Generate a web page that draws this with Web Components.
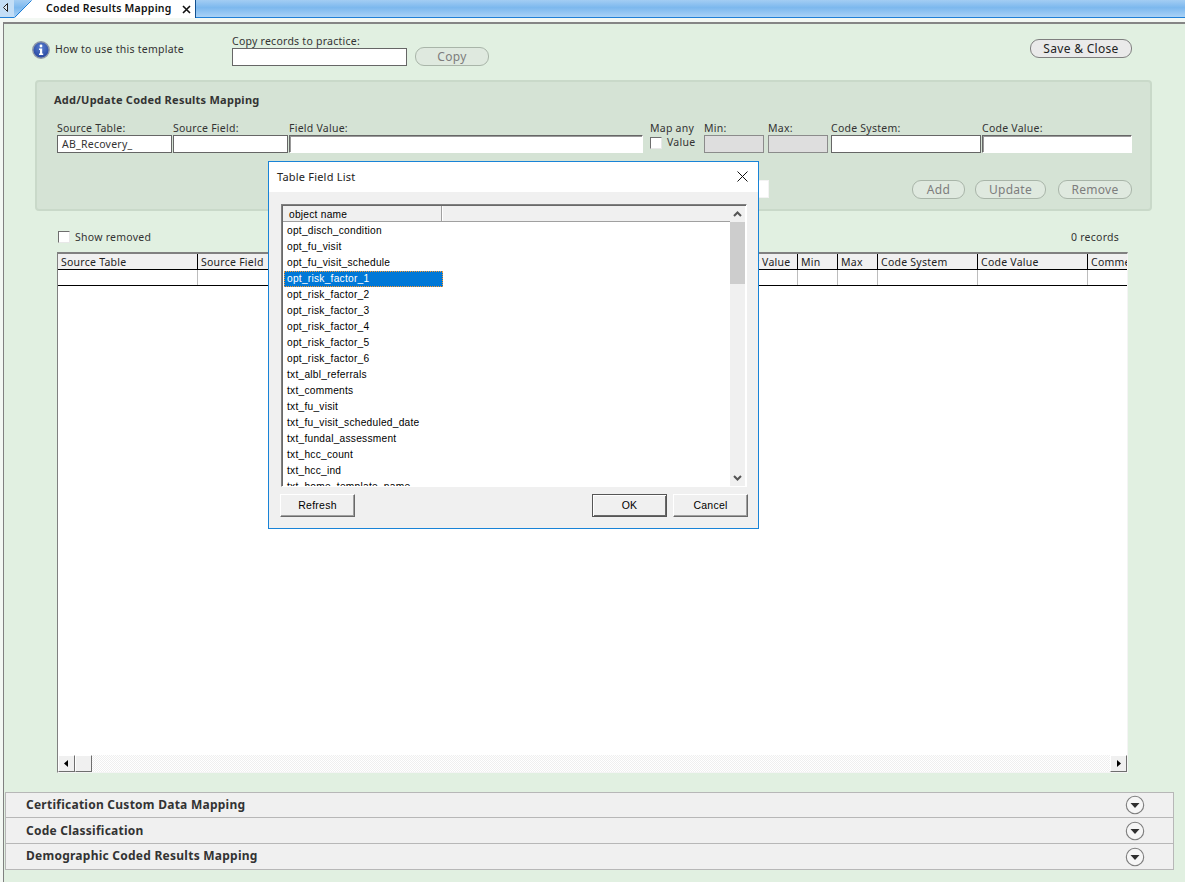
<!DOCTYPE html>
<html>
<head>
<meta charset="utf-8">
<title>Coded Results Mapping</title>
<style>
    html, body {
        margin: 0;
        padding: 0;
        height: 100%;
        overflow: hidden;
        background: #f3f8f3;
    }
</style>
</head>
<body>
<app-window></app-window>

<script>
const UI_FONT = `"Noto Sans", "Liberation Sans", sans-serif`;
const DLG_FONT = `"Liberation Sans", Arial, sans-serif`;

class AppTabbar extends HTMLElement {
    constructor() {
        super();
        this.attachShadow({mode: 'open'});
    }

    connectedCallback() {
        this.shadowRoot.innerHTML = `
            <style>
                :host {
                    display: flex;
                    height: 18px;
                    box-sizing: border-box;
                    background: linear-gradient(#a3cdf3, #7cb8ee 45%, #a9d2f6);
                    border-bottom: 1px solid #1f7fd6;
                    font: 600 10.5px ${UI_FONT};
                    color: #111;
                }
                .left { width: 14px; flex: none; background: #c3def6; }
                .left svg, .slant { display: block; }
                .slant { flex: none; }
                .tab {
                    width: 164px;
                    height: 18px;
                    flex: none;
                    display: flex;
                    align-items: center;
                    background: #fff;
                    border-right: 1px solid #12508f;
                    padding: 0 0 2px 14px;
                    box-sizing: border-box;
                }
                .tab span { flex: 1; white-space: nowrap; }
                .tab svg { margin: 2px 4px 0 0; }
            </style>
            <div class="left">
                <svg width="14" height="17"><path d="M7.5 3.5V11.5L3.5 7.5Z" fill="#dbe9f5" stroke="#222"/></svg>
            </div>
            <svg class="slant" width="18" height="18">
                <path d="M18 0V18H0Z" fill="#fff"/>
                <path d="M0 18H1L18 0H17Z" fill="#c3def6"/>
                <path d="M0.5 17.5L17.5 0.5" stroke="#1f7fd6"/>
            </svg>
            <div class="tab">
                <span>Coded Results Mapping</span>
                <svg width="9" height="9"><path d="M1 1L8 8M8 1L1 8" stroke="#111" stroke-width="1.6"/></svg>
            </div>
        `;
    }
}

class PillButton extends HTMLElement {
    constructor() {
        super();
        this.attachShadow({mode: 'open'});
    }

    connectedCallback() {
        this.shadowRoot.innerHTML = `
            <style>
                :host {
                    display: flex;
                    align-items: center;
                    justify-content: center;
                    box-sizing: border-box;
                    height: 19px;
                    border: 1px solid #a9b5a9;
                    border-radius: 9px;
                    background: #dfe9df;
                    color: #7d7d7d;
                    font: 12px ${UI_FONT};
                    letter-spacing: .3px;
                }
                :host([active]) {
                    border-color: #7f7f7f;
                    background: #eaeaea;
                    color: #222;
                }
            </style>
            <slot></slot>
        `;
    }
}

class FieldBox extends HTMLElement {
    constructor() {
        super();
        this.attachShadow({mode: 'open'});
    }

    connectedCallback() {
        const label = this.getAttribute('label') || '';
        const value = this.getAttribute('value') || '';
        this.shadowRoot.innerHTML = `
            <style>
                :host {
                    display: block;
                    font: 10.5px ${UI_FONT};
                    letter-spacing: .25px;
                    color: #333;
                }
                .label { height: 13px; line-height: 13px; white-space: nowrap; }
                .input {
                    box-sizing: border-box;
                    height: 18px;
                    line-height: 16px;
                    padding-left: 4px;
                    background: #fff;
                    border: 1px solid #666;
                    white-space: nowrap;
                }
                :host([disabled]) .input { background: #dedede; border-color: #8b8b8b; }
                :host([sunken]) .input {
                    border-width: 1px;
                    border-color: #666 #fff #fff #666;
                    box-shadow: inset 1px 1px 0 #999;
                }
            </style>
            <div class="label">${label}</div>
            <div class="input">${value}</div>
        `;
    }
}

class WinCheck extends HTMLElement {
    constructor() {
        super();
        this.attachShadow({mode: 'open'});
    }

    connectedCallback() {
        this.shadowRoot.innerHTML = `
            <style>
                :host {
                    display: block;
                    width: 12px;
                    height: 12px;
                    box-sizing: border-box;
                    background: #fff;
                    border: 1px solid;
                    border-color: #6e6e6e #e8e8e8 #e8e8e8 #6e6e6e;
                    flex: none;
                }
            </style>
        `;
    }
}

class MappingForm extends HTMLElement {
    constructor() {
        super();
        this.attachShadow({mode: 'open'});
    }

    connectedCallback() {
        this.shadowRoot.innerHTML = `
            <style>
                :host {
                    display: block;
                    box-sizing: border-box;
                    width: 1117px;
                    height: 131px;
                    margin-left: 30px;
                    padding: 11px 18px 0 20px;
                    background: #d5e3d5;
                    border: 2px solid #c9d9c9;
                    border-radius: 4px;
                    font-family: ${UI_FONT};
                }
                .title {
                    font-size: 11px;
                    font-weight: 700;
                    line-height: 14px;
                    color: #333;
                    margin-left: -3px;
                }
                .fields {
                    display: grid;
                    grid-template-columns: 116px 116px 361px 54px 64px 63px 151px 150px;
                    margin-top: 15px;
                }
                .map {
                    font-size: 10.5px;
                    letter-spacing: .25px;
                    line-height: 13px;
                    color: #333;
                }
                .map div { display: flex; align-items: center; gap: 5px; margin-top: 1px; }
                .actions { display: flex; margin-top: 27px; height: 19px; }
                .hidden-input {
                    width: 100px;
                    height: 18px;
                    margin-left: 612px;
                    background: #fff;
                    border: 1px solid #f3f3f3;
                    box-sizing: border-box;
                }
                .spacer { flex: 1; }
            </style>
            <div class="title">Add/Update Coded Results Mapping</div>
            <div class="fields">
                <field-box label="Source Table:" value="AB_Recovery_" style="width:115px"></field-box>
                <field-box label="Source Field:" style="width:115px"></field-box>
                <field-box label="Field Value:" sunken style="width:354px"></field-box>
                <div class="map">Map any<div><win-check></win-check>Value</div></div>
                <field-box label="Min:" disabled style="width:60px"></field-box>
                <field-box label="Max:" disabled style="width:60px"></field-box>
                <field-box label="Code System:" style="width:150px"></field-box>
                <field-box label="Code Value:" sunken style="width:150px"></field-box>
            </div>
            <div class="actions">
                <div class="hidden-input"></div>
                <div class="spacer"></div>
                <pill-button style="width:53px">Add</pill-button>
                <pill-button style="width:71px;margin-left:10px">Update</pill-button>
                <pill-button style="width:74px;margin-left:12px">Remove</pill-button>
            </div>
        `;
    }
}

class ResultsGrid extends HTMLElement {
    constructor() {
        super();
        this.attachShadow({mode: 'open'});
    }

    connectedCallback() {
        const cols = [
            ['Source Table', 140], ['Source Field', 140], ['Field Value', 380],
            ['Map any Value', 80, 'text-indent:-6px'], ['Min', 40], ['Max', 40],
            ['Code System', 100], ['Code Value', 110], ['Comments', 100]
        ];
        const head = cols.map(c => `<div class="cell" style="width:${c[1]}px;${c[2] || ''}">${c[0]}</div>`).join('');
        const blank = cols.map(c => `<div class="cell" style="width:${c[1]}px"></div>`).join('');
        this.shadowRoot.innerHTML = `
            <style>
                :host {
                    display: flex;
                    flex-direction: column;
                    box-sizing: border-box;
                    width: 1071px;
                    height: 521px;
                    margin-left: 52px;
                    background: #fff;
                    border-style: solid;
                    border-width: 2px 1px 1px 1px;
                    border-color: #808080 #f4f4f4 #f4f4f4 #808080;
                    overflow: hidden;
                    font: 10.5px ${UI_FONT};
                    letter-spacing: .25px;
                    color: #333;
                }
                .row { display: flex; flex: none; box-sizing: border-box; border-bottom: 1px solid #000; }
                .head { height: 16px; background: #f0f0f0; }
                .blank { height: 16px; }
                .cell {
                    flex: none;
                    box-sizing: border-box;
                    padding-left: 3px;
                    line-height: 17px;
                    white-space: nowrap;
                    overflow: hidden;
                    border-right: 1px solid #000;
                }
                .head .cell { color: #222; }
                .blank .cell { border-right-color: #bdbdbd; }
                .body { flex: 1; }
                .scroll {
                    flex: none;
                    display: flex;
                    height: 17px;
                    background: repeating-conic-gradient(#efefef 0 25%, #fff 0 50%) 0 0 / 2px 2px;
                }
                .btn {
                    flex: none;
                    box-sizing: border-box;
                    width: 17px;
                    height: 17px;
                    display: flex;
                    align-items: center;
                    justify-content: center;
                    background: #f0f0f0;
                    border: 1px solid;
                    border-color: #fff #6e6e6e #6e6e6e #fff;
                }
                .track { flex: 1; }
            </style>
            <div class="row head">${head}</div>
            <div class="row blank">${blank}</div>
            <div class="body"></div>
            <div class="scroll">
                <div class="btn"><svg width="5" height="7"><path d="M4 0V7L0 3.5Z" fill="#000"/></svg></div>
                <div class="btn"></div>
                <div class="track"></div>
                <div class="btn"><svg width="5" height="7"><path d="M1 0V7L5 3.5Z" fill="#000"/></svg></div>
            </div>
        `;
    }
}

class AccordionRow extends HTMLElement {
    constructor() {
        super();
        this.attachShadow({mode: 'open'});
    }

    connectedCallback() {
        this.shadowRoot.innerHTML = `
            <style>
                :host {
                    display: flex;
                    align-items: center;
                    box-sizing: border-box;
                    height: 26px;
                    padding: 0 28px 0 20px;
                    background: #f0f0f0;
                    border: 1px solid #b7b7b7;
                    border-bottom: 0;
                    font: 700 12px ${UI_FONT};
                    color: #333;
                }
                :host(:first-child) { height: 25px; }
                :host(:last-child) { border-bottom: 1px solid #b7b7b7; height: 27px; }
                span { flex: 1; white-space: nowrap; }
                :host(:first-child) span { padding-bottom: 2px; }
                :host(:last-child) span { padding-bottom: 2px; }
                svg { display: block; flex: none; }
            </style>
            <span><slot></slot></span>
            <svg width="20" height="20" viewBox="0 0 20 20">
                <circle cx="10" cy="10" r="8.7" fill="#f6f6f6" stroke="#7d7d7d" stroke-width="1.1"/>
                <path d="M5.5 8H14.5L10 13Z" fill="#2f2f2f"/>
            </svg>
        `;
    }
}

class WinButton extends HTMLElement {
    constructor() {
        super();
        this.attachShadow({mode: 'open'});
    }

    connectedCallback() {
        this.shadowRoot.innerHTML = `
            <style>
                :host {
                    display: flex;
                    align-items: center;
                    justify-content: center;
                    box-sizing: border-box;
                    width: 75px;
                    height: 23px;
                    padding-bottom: 1px;
                    background: #f0f0f0;
                    border: 1px solid;
                    border-color: #fff #696969 #696969 #fff;
                    box-shadow: inset -1px -1px 0 #a0a0a0;
                    font: 10.5px ${DLG_FONT};
                    color: #000;
                }
                :host([default]) {
                    border-color: #555;
                    box-shadow: inset 1px 1px 0 #fff, inset -1px -1px 0 #696969;
                }
            </style>
            <slot></slot>
        `;
    }
}

class FieldDialog extends HTMLElement {
    constructor() {
        super();
        this.attachShadow({mode: 'open'});
    }

    connectedCallback() {
        const names = [
            'opt_disch_condition', 'opt_fu_visit', 'opt_fu_visit_schedule', 'opt_risk_factor_1',
            'opt_risk_factor_2', 'opt_risk_factor_3', 'opt_risk_factor_4', 'opt_risk_factor_5',
            'opt_risk_factor_6', 'txt_albl_referrals', 'txt_comments', 'txt_fu_visit',
            'txt_fu_visit_scheduled_date', 'txt_fundal_assessment', 'txt_hcc_count', 'txt_hcc_ind',
            'txt_home_template_name'
        ];
        const rows = names.map((n, i) =>
            `<div class="item${i === 3 ? ' sel' : ''}">${n}</div>`).join('');
        this.shadowRoot.innerHTML = `
            <style>
                :host {
                    position: absolute;
                    left: 268px;
                    top: 161px;
                    width: 491px;
                    height: 368px;
                    box-sizing: border-box;
                    display: flex;
                    flex-direction: column;
                    background: #f0f0f0;
                    border: 1px solid #1883d7;
                    font: 10.2px ${DLG_FONT};
                    color: #000;
                }
                .title {
                    flex: none;
                    height: 30px;
                    box-sizing: border-box;
                    display: flex;
                    align-items: center;
                    justify-content: space-between;
                    padding: 0 10px 2px 8px;
                    background: #fff;
                    font: 11px ${UI_FONT};
                    letter-spacing: .2px;
                    color: #222;
                }
                .body { flex: 1; display: flex; flex-direction: column; padding: 12px 10px 0 12px; }
                .list {
                    flex: none;
                    box-sizing: border-box;
                    width: 466px;
                    height: 283px;
                    display: flex;
                    background: #fff;
                    border: 1px solid;
                    border-color: #808080 #fff #fff #808080;
                    box-shadow: inset 1px 1px 0 #696969;
                }
                .main { flex: 1; min-width: 0; display: flex; flex-direction: column; padding: 1px 0 0 1px; }
                .cols {
                    flex: none;
                    display: flex;
                    height: 16px;
                    box-sizing: border-box;
                    background: #f0f0f0;
                    border-bottom: 1px solid #a0a0a0;
                }
                .col {
                    box-sizing: border-box;
                    width: 159px;
                    padding-left: 6px;
                    line-height: 17px;
                    border-right: 1px solid #a0a0a0;
                }
                .col + .col { flex: 1; border-right: 0; border-left: 1px solid #fff; }
                .items { flex: 1; overflow: hidden; padding: 1px 0 0 1px; }
                .item {
                    box-sizing: border-box;
                    width: 159px;
                    height: 16px;
                    padding-left: 3px;
                    line-height: 16px;
                    white-space: nowrap;
                }
                .sel {
                    background: #0078d7;
                    color: #fff;
                    border: 1px dotted #ff9a2e;
                    padding-left: 2px;
                    line-height: 14px;
                }
                .bar {
                    flex: none;
                    width: 15px;
                    display: flex;
                    flex-direction: column;
                    background: #f0f0f0;
                    margin: 1px 1px 0 0;
                }
                .arrow { flex: none; height: 16px; display: flex; align-items: center; justify-content: center; }
                .thumb { flex: none; height: 62px; background: #cdcdcd; }
                .track { flex: 1; }
                .buttons { display: flex; gap: 6px; margin-top: 7px; }
                .spacer { flex: 1; }
                .buttons win-button:first-child { margin-left: -1px; }
            </style>
            <div class="title">
                <span>Table Field List</span>
                <svg width="11" height="11"><path d="M.5.5L10.5 10.5M10.5.5L.5 10.5" stroke="#111"/></svg>
            </div>
            <div class="body">
                <div class="list">
                    <div class="main">
                        <div class="cols"><div class="col">object name</div><div class="col"></div></div>
                        <div class="items">${rows}</div>
                    </div>
                    <div class="bar">
                        <div class="arrow"><svg width="9" height="6"><path d="M1 5L4.5 1.5L8 5" fill="none" stroke="#555" stroke-width="2"/></svg></div>
                        <div class="thumb"></div>
                        <div class="track"></div>
                        <div class="arrow"><svg width="9" height="6"><path d="M1 1L4.5 4.5L8 1" fill="none" stroke="#555" stroke-width="2"/></svg></div>
                    </div>
                </div>
                <div class="buttons">
                    <win-button>Refresh</win-button>
                    <div class="spacer"></div>
                    <win-button default>OK</win-button>
                    <win-button>Cancel</win-button>
                </div>
            </div>
        `;
    }
}

class AppWindow extends HTMLElement {
    constructor() {
        super();
        this.attachShadow({mode: 'open'});
    }

    connectedCallback() {
        this.shadowRoot.innerHTML = `
            <style>
                :host {
                    display: flex;
                    flex-direction: column;
                    position: relative;
                    width: 1185px;
                    height: 882px;
                    overflow: hidden;
                    font: 10.5px ${UI_FONT};
                    letter-spacing: .25px;
                    color: #333;
                }
                .panel {
                    flex: 1;
                    margin: 4px 0 0 3px;
                    padding-left: 1px;
                    background: #e1f0e1;
                    border-top: 2px solid #858585;
                    border-left: 1px solid #808080;
                }
                .toolbar { display: flex; height: 56px; box-sizing: border-box; padding-left: 27px; }
                .help { display: flex; align-items: center; gap: 5px; width: 200px; height: 18px; margin-top: 17px; }
                .help svg { flex: none; }
                .help span { padding-bottom: 3px; }
                .copy-field { width: 175px; margin-top: 11px; }
                .copy { width: 74px; margin: 23px 0 0 8px; }
                .save { width: 102px; margin: 15px 0 0 541px; }
                .records {
                    display: flex;
                    align-items: center;
                    gap: 5px;
                    width: 1061px;
                    height: 12px;
                    margin: 20px 0 9px 53px;
                }
                .records .count { margin-left: auto; }
                .accordion { width: 1169px; margin-top: 19px; }
            </style>
            <app-tabbar></app-tabbar>
            <div class="panel">
                <div class="toolbar">
                    <div class="help">
                        <svg width="18" height="18" viewBox="0 0 18 18">
                            <defs>
                                <radialGradient id="b" cx=".5" cy=".35" r=".7">
                                    <stop offset="0" stop-color="#5b7fd0"/>
                                    <stop offset="1" stop-color="#1f3f9a"/>
                                </radialGradient>
                            </defs>
                            <circle cx="9" cy="9" r="8.2" fill="url(#b)" stroke="#8f98a8" stroke-width="1.4"/>
                            <circle cx="9" cy="5" r="1.4" fill="#fff"/>
                            <path d="M7 7.6H10.2V12.6H11.2V14H7V12.6H8V9H7Z" fill="#fff"/>
                        </svg>
                        <span>How to use this template</span>
                    </div>
                    <field-box class="copy-field" label="Copy records to practice:"></field-box>
                    <pill-button class="copy">Copy</pill-button>
                    <pill-button class="save" active>Save &amp; Close</pill-button>
                </div>
                <mapping-form></mapping-form>
                <div class="records">
                    <win-check></win-check>
                    <span>Show removed</span>
                    <span class="count">0 records</span>
                </div>
                <results-grid></results-grid>
                <div class="accordion">
                    <accordion-row>Certification Custom Data Mapping</accordion-row>
                    <accordion-row>Code Classification</accordion-row>
                    <accordion-row>Demographic Coded Results Mapping</accordion-row>
                </div>
            </div>
            <field-dialog></field-dialog>
        `;
    }
}

customElements.define('app-tabbar', AppTabbar);
customElements.define('pill-button', PillButton);
customElements.define('field-box', FieldBox);
customElements.define('win-check', WinCheck);
customElements.define('mapping-form', MappingForm);
customElements.define('results-grid', ResultsGrid);
customElements.define('accordion-row', AccordionRow);
customElements.define('win-button', WinButton);
customElements.define('field-dialog', FieldDialog);
customElements.define('app-window', AppWindow);
</script>
</body>
</html>
